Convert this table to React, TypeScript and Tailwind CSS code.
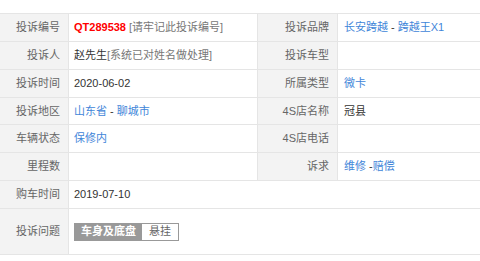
const font = { fontFamily: '"Liberation Sans", "Noto Sans CJK SC", sans-serif' }

type Cell = { label: string; value: React.ReactNode }

function Label({ children, wide }: { children: React.ReactNode; wide?: boolean }) {
  return (
    <div
      className={
        "flex items-center justify-end bg-[#f3f3f3] text-[#666] pr-[8px] border-[#e5e5e5] " +
        (wide ? "w-[81px] border-l border-r" : "w-[69px] border-r")
      }
    >
      {children}
    </div>
  )
}

function Link({ children }: { children: React.ReactNode }) {
  return <span className="text-[#3f86d9]">{children}</span>
}

function Row({ h, left, right }: { h: string; left: Cell; right?: Cell }) {
  return (
    <div className={"flex border-b border-[#e5e5e5] " + h}>
      <Label>{left.label}</Label>
      <div className={"flex items-center pl-[5px] text-[#333] " + (right ? "w-[188px]" : "flex-1")}>{left.value}</div>
      {right && (
        <>
          <Label wide>{right.label}</Label>
          <div className="flex flex-1 items-center pl-[6px] text-[#333]">{right.value}</div>
        </>
      )}
    </div>
  )
}

export default function App() {
  return (
    <div className="w-[480px] h-[261px] bg-white overflow-hidden text-[11px]" style={font}>
      <div className="mt-[13px] border-t border-[#e5e5e5]">
        <Row
          h="h-[28px]"
          left={{
            label: "投诉编号",
            value: (
              <>
                <span className="text-[#f00] font-bold">QT289538</span>
                <span className="text-[#777] ml-[3px]">[请牢记此投诉编号]</span>
              </>
            ),
          }}
          right={{
            label: "投诉品牌",
            value: (
              <>
                <Link>长安跨越</Link>
                <span className="mx-[3px]">-</span>
                <Link>跨越王X1</Link>
              </>
            ),
          }}
        />
        <Row
          h="h-[28px]"
          left={{
            label: "投诉人",
            value: (
              <>
                <span>赵先生</span>
                <span className="text-[#777]">[系统已对姓名做处理]</span>
              </>
            ),
          }}
          right={{ label: "投诉车型", value: null }}
        />
        <Row
          h="h-[28px]"
          left={{ label: "投诉时间", value: "2020-06-02" }}
          right={{ label: "所属类型", value: <Link>微卡</Link> }}
        />
        <Row
          h="h-[27px]"
          left={{
            label: "投诉地区",
            value: (
              <>
                <Link>山东省</Link>
                <span className="mx-[3px]">-</span>
                <Link>聊城市</Link>
              </>
            ),
          }}
          right={{ label: "4S店名称", value: "冠县" }}
        />
        <Row
          h="h-[28px]"
          left={{ label: "车辆状态", value: <Link>保修内</Link> }}
          right={{ label: "4S店电话", value: null }}
        />
        <Row
          h="h-[28px]"
          left={{ label: "里程数", value: null }}
          right={{
            label: "诉求",
            value: (
              <>
                <Link>维修</Link>
                <span className="ml-[3px]">-</span>
                <Link>赔偿</Link>
              </>
            ),
          }}
        />
        <Row h="h-[28px]" left={{ label: "购车时间", value: "2019-07-10" }} />
        <Row
          h="h-[46px]"
          left={{
            label: "投诉问题",
            value: (
              <div className="flex h-[18px] border border-[#999]">
                <span className="flex items-center bg-[#999] text-white font-bold px-[6px]">车身及底盘</span>
                <span className="flex items-center bg-white text-[#666] px-[7px]">悬挂</span>
              </div>
            ),
          }}
        />
      </div>
    </div>
  )
}
